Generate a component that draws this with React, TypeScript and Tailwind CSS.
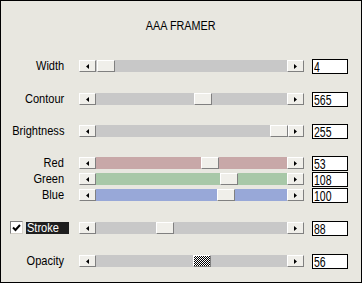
import React from 'react';

type Row = {
  label: string;
  value: string;
  track: string;
  thumb: string;
  gap: string;
  checker?: boolean;
  check?: boolean;
};

// thumb offset = pixels from the left end of the track
const rows: Row[] = [
  { label: 'Width', value: '4', track: 'bg-[#c8c8c8]', thumb: 'ml-[1px]', gap: 'mt-0' },
  { label: 'Contour', value: '565', track: 'bg-[#c8c8c8]', thumb: 'ml-[98px]', gap: 'mt-[17px]' },
  { label: 'Brightness', value: '255', track: 'bg-[#c8c8c8]', thumb: 'ml-[174px]', gap: 'mt-[16px]' },
  { label: 'Red', value: '53', track: 'bg-[#c8a8a8]', thumb: 'ml-[105px]', gap: 'mt-[16px]' },
  { label: 'Green', value: '108', track: 'bg-[#a8c8a8]', thumb: 'ml-[124px]', gap: 'mt-0' },
  { label: 'Blue', value: '100', track: 'bg-[#98a8d8]', thumb: 'ml-[121px]', gap: 'mt-0' },
  { label: 'Stroke', value: '88', track: 'bg-[#c8c8c8]', thumb: 'ml-[60px]', gap: 'mt-[17px]', check: true },
  { label: 'Opacity', value: '56', track: 'bg-[#c8c8c8]', thumb: 'ml-[97px]', gap: 'mt-[17px]', checker: true },
];

const bevel = 'border border-t-white border-l-white border-b-[#808080] border-r-[#808080]';

const Arrow = ({ dir }: { dir: 'l' | 'r' }) => (
  <svg width="3" height="5" viewBox="0 0 3 5">
    <polygon points={dir === 'l' ? '3,0 3,5 0,2.5' : '0,0 0,5 3,2.5'} fill="#000" />
  </svg>
);

function Slider({ row }: { row: Row }) {
  return (
    <div className="flex h-[12px] w-[225px]">
      <div className={`flex h-full w-[17px] items-center justify-center bg-[#f0efea] ${bevel}`}>
        <Arrow dir="l" />
      </div>
      <div className={`flex h-full flex-1 ${row.track}`}>
        <div
          className={`h-full w-[18px] ${row.thumb} ${bevel} ${
            row.checker
              ? 'bg-[repeating-conic-gradient(#000_0%_25%,#fff_0%_50%)] bg-size-[2px_2px]'
              : 'bg-[#f0efea]'
          }`}
        />
      </div>
      <div className={`flex h-full w-[17px] items-center justify-center bg-[#f0efea] ${bevel}`}>
        <Arrow dir="r" />
      </div>
    </div>
  );
}

function Label({ row }: { row: Row }) {
  if (row.check) {
    return (
      <div className="flex w-[78px] items-start justify-end pr-[10px]">
        <div className="mt-[-1px] mr-[3px] flex h-[13px] w-[13px] items-center justify-center border border-t-[#808080] border-l-[#808080] border-b-[#d4d0c8] border-r-[#d4d0c8] bg-white">
          <svg width="9" height="8" viewBox="0 0 9 8">
            <path d="M1 3.5 L3.5 6 L8 1" stroke="#000" strokeWidth="2" fill="none" />
          </svg>
        </div>
        <span className="inline-block h-[12px] bg-[#1e1e1e] pl-[1px] pr-[4px] text-[13px] leading-[12px] text-white">
          <span className="inline-block origin-left scale-x-[0.85]">Stroke</span>
        </span>
      </div>
    );
  }
  return (
    <div className="mt-[-1px] w-[78px] pr-[15px] text-right text-[13px] leading-[14px] text-black">
      <span className="inline-block origin-right scale-x-[0.85]">{row.label}</span>
    </div>
  );
}

export default function App() {
  return (
    <div
      className="flex h-[283px] w-[362px] flex-col border border-black bg-[#e8e7e0]"
      style={{ fontFamily: '"Liberation Sans", Arial, sans-serif' }}
    >
      {/* titulo */}
      <div className="h-[58px] pt-[18px] text-center text-[12px] leading-[14px] text-black">
        <span className="inline-block scale-x-90">AAA FRAMER</span>
      </div>

      {rows.map((row) => (
        <div key={row.label} className={`flex h-[16px] items-start ${row.gap}`}>
          <div className="mt-[1px]">
            <Label row={row} />
          </div>
          <div className="mt-[1px]">
            <Slider row={row} />
          </div>
          <div className="ml-[8px] h-[15px] w-[36px] overflow-hidden border border-black bg-white pl-[1px] text-[14px] leading-[14px] text-black">
            <span className="inline-block origin-left scale-x-75">{row.value}</span>
          </div>
        </div>
      ))}
    </div>
  );
}
